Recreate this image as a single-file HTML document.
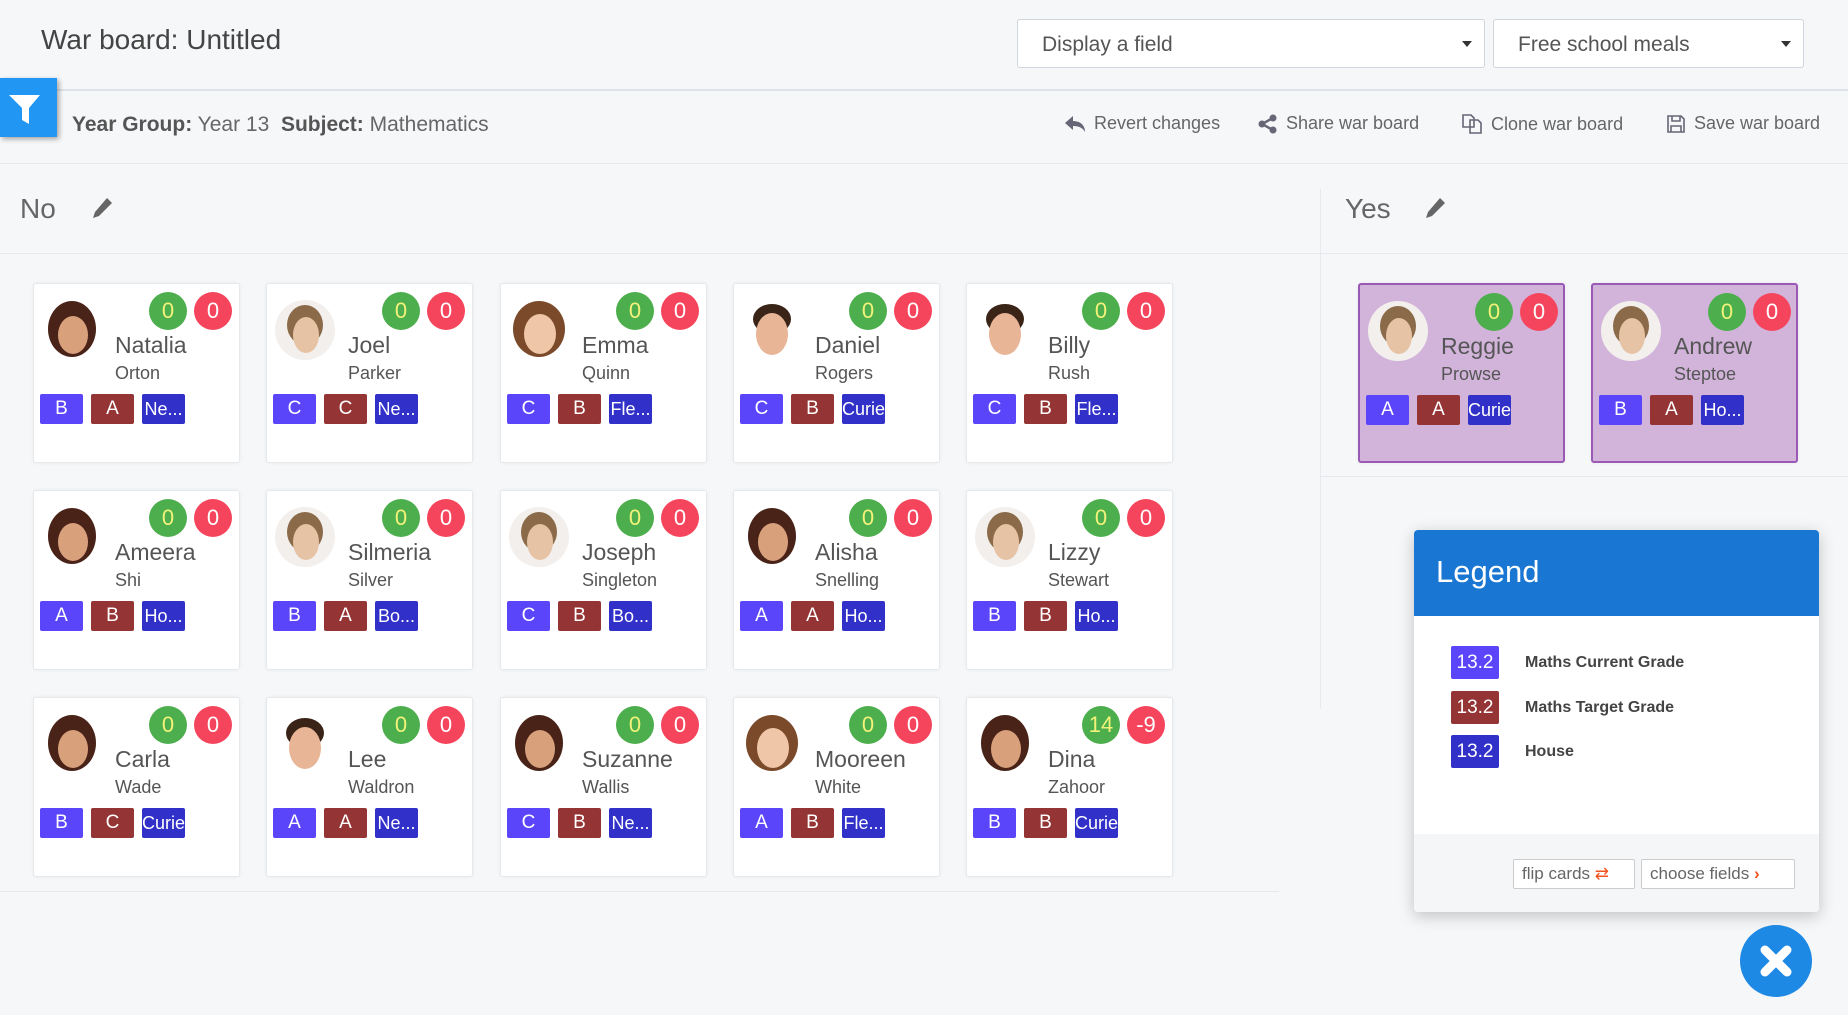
<!DOCTYPE html>
<html><head><meta charset="utf-8"><style>
*{box-sizing:border-box;margin:0;padding:0}
body{width:1848px;height:1015px;overflow:hidden;background:#f5f7f9;font-family:"Liberation Sans",sans-serif;color:#555;position:relative}
.abs{position:absolute}
.title{left:41px;top:24px;font-size:28px;color:#444}
.sel{top:19px;height:49px;border:1px solid #cfd5da;border-radius:3px;background:#fff;font-size:21px;color:#555;padding:13px 0 0 24px}
.sel:after{content:"";position:absolute;right:12px;top:21px;border:5px solid transparent;border-top:6px solid #333}
.hline{height:2px;background:#dde3e8}
.filter{left:0;top:78px;width:57px;height:59px;background:#2196f3;box-shadow:2px 2px 5px rgba(0,0,0,.35)}
.info{left:72px;top:113px;font-size:21px;color:#666}
.info b{color:#555}
.tb{top:113px;font-size:18px;color:#666;display:flex;align-items:center;gap:8px}
.col{font-size:28px;color:#666}
.card{position:absolute;width:207px;height:180px;background:#fff;border:1px solid #e6e9ec;border-radius:3px;box-shadow:0 0 3px rgba(0,0,0,.06)}
.card.y{background:#d2b4db;border:2px solid #9b59b6}
.card svg{position:absolute;left:8px;top:15px;width:60px;height:62px}
.g,.r{position:absolute;top:8px;width:38px;height:38px;border-radius:50%;color:#fff;font-size:22px;text-align:center;line-height:38px}
.g{left:115px;background:#4cae4c;color:#f2f27a}
.r{left:160px;background:#f5455c}
.fn{position:absolute;left:81px;top:48px;font-size:23px;color:#555}
.ln{position:absolute;left:81px;top:79px;font-size:18px;color:#555}
.chips{position:absolute;left:6px;top:110px;display:flex;gap:8px}
.chips i{font-style:normal;width:43px;height:30px;border-radius:2px;color:#fff;font-size:19px;text-align:center;line-height:30px;overflow:hidden;white-space:nowrap}
.c1{background:#5b45fa}.c2{background:#943434}.c3{background:#3131c9;font-size:18px!important}
.legend{left:1414px;top:530px;width:405px;height:382px;background:#fff;border-radius:4px;box-shadow:0 4px 16px rgba(0,0,0,.22);overflow:hidden}
.lh{height:86px;background:#1976d2;color:#fff;font-size:31px;padding:24px 0 0 22px}
.lr{position:absolute;left:37px;display:flex;align-items:center;gap:26px;font-size:16px;font-weight:bold;color:#444}
.lr i{font-style:normal;width:48px;height:33px;color:#fff;font-size:19px;font-weight:normal;text-align:center;line-height:33px;border-radius:2px}
.lf{position:absolute;left:0;bottom:0;width:100%;height:78px;background:#f5f6f7}
.btn{position:absolute;top:25px;height:30px;border:1px solid #ccc;background:#fff;border-radius:2px;font-size:17px;color:#666;padding:4px 0 0 8px}
.close{left:1740px;top:925px;width:72px;height:72px;border-radius:50%;background:#1e88e5}
</style></head><body>
<div class="abs title">War board: Untitled</div>
<div class="abs sel" style="left:1017px;width:468px">Display a field</div>
<div class="abs sel" style="left:1493px;width:311px">Free school meals</div>
<div class="abs hline" style="left:0;top:89px;width:1848px"></div>
<div class="abs filter"><svg width="57" height="59" viewBox="0 0 57 59"><path d="M9 17h31l-11 13v16l-7-4V30z" fill="#fff"/></svg></div>
<div class="abs info"><b>Year Group:</b> Year 13 &nbsp;<b>Subject:</b> Mathematics</div>
<div class="abs tb" style="left:1064px"><svg width="22" height="20" viewBox="0 0 22 20"><path d="M9 2L1 9l8 7v-4c6 0 10 2 12 6 0-7-5-11-12-11z" fill="#667"/></svg>Revert changes</div>
<div class="abs tb" style="left:1258px"><svg width="20" height="20" viewBox="0 0 20 20"><circle cx="15" cy="4" r="3.5" fill="#667"/><circle cx="4" cy="10" r="3.5" fill="#667"/><circle cx="15" cy="16" r="3.5" fill="#667"/><path d="M15 4L4 10l11 6" stroke="#667" stroke-width="2.5" fill="none"/></svg>Share war board</div>
<div class="abs tb" style="left:1461px"><svg width="22" height="22" viewBox="0 0 22 22"><path d="M2 2h8l3 3v9H2zM9 7h8l3 3v10H9z" fill="none" stroke="#667" stroke-width="1.6"/></svg>Clone war board</div>
<div class="abs tb" style="left:1666px"><svg width="20" height="20" viewBox="0 0 20 20"><path d="M2 2h13l3 3v13H2zM6 2v5h8V2M5 12h10v6H5z" fill="none" stroke="#667" stroke-width="1.6"/></svg>Save war board</div>
<div class="abs hline" style="left:0;top:163px;width:1848px;height:1px;background:#e6eaee"></div>
<div class="abs col" style="left:20px;top:193px">No</div>
<svg class="abs" style="left:90px;top:196px" width="24" height="24" viewBox="0 0 24 24"><path d="M17 2l5 5L9 20l-6 2 2-6z" fill="#666"/></svg>
<div class="abs col" style="left:1345px;top:193px">Yes</div>
<svg class="abs" style="left:1423px;top:196px" width="24" height="24" viewBox="0 0 24 24"><path d="M17 2l5 5L9 20l-6 2 2-6z" fill="#666"/></svg>
<div class="abs" style="left:0;top:253px;width:1320px;height:1px;background:#e6eaee"></div>
<div class="abs" style="left:1320px;top:189px;width:1px;height:520px;background:#e6eaee"></div>
<div class="abs" style="left:1321px;top:253px;width:527px;height:1px;background:#e6eaee"></div>
<div class="abs" style="left:1321px;top:476px;width:527px;height:1px;background:#e6eaee"></div>
<div class="abs" style="left:0;top:891px;width:1279px;height:1px;background:#e6eaee"></div>

<!-- avatar defs -->
<svg width="0" height="0" style="position:absolute"><defs>
<symbol id="a1" viewBox="0 0 60 62"><ellipse cx="30" cy="30" rx="24" ry="28" fill="#4a2318"/><ellipse cx="31" cy="36" rx="15" ry="19" fill="#d9a07c"/></symbol>
<symbol id="a2" viewBox="0 0 60 62"><circle cx="30" cy="31" r="30" fill="#f2efec"/><ellipse cx="30" cy="26" rx="18" ry="20" fill="#8a6a48"/><ellipse cx="31" cy="36" rx="13" ry="18" fill="#e7c3a5"/></symbol>
<symbol id="a3" viewBox="0 0 60 62"><ellipse cx="30" cy="30" rx="26" ry="28" fill="#7a4a2a"/><ellipse cx="31" cy="35" rx="16" ry="20" fill="#f0c6a8"/></symbol>
<symbol id="a4" viewBox="0 0 60 62"><ellipse cx="30" cy="20" rx="19" ry="15" fill="#3a2418"/><ellipse cx="30" cy="35" rx="16" ry="21" fill="#e8b596"/></symbol>
</defs></svg>

<!-- Row 1 -->
<div class="card" style="left:33px;top:283px"><svg><use href="#a1"/></svg><span class="g">0</span><span class="r">0</span><div class="fn">Natalia</div><div class="ln">Orton</div><div class="chips"><i class="c1">B</i><i class="c2">A</i><i class="c3">Ne...</i></div></div>
<div class="card" style="left:266px;top:283px"><svg><use href="#a2"/></svg><span class="g">0</span><span class="r">0</span><div class="fn">Joel</div><div class="ln">Parker</div><div class="chips"><i class="c1">C</i><i class="c2">C</i><i class="c3">Ne...</i></div></div>
<div class="card" style="left:500px;top:283px"><svg><use href="#a3"/></svg><span class="g">0</span><span class="r">0</span><div class="fn">Emma</div><div class="ln">Quinn</div><div class="chips"><i class="c1">C</i><i class="c2">B</i><i class="c3">Fle...</i></div></div>
<div class="card" style="left:733px;top:283px"><svg><use href="#a4"/></svg><span class="g">0</span><span class="r">0</span><div class="fn">Daniel</div><div class="ln">Rogers</div><div class="chips"><i class="c1">C</i><i class="c2">B</i><i class="c3">Curie</i></div></div>
<div class="card" style="left:966px;top:283px"><svg><use href="#a4"/></svg><span class="g">0</span><span class="r">0</span><div class="fn">Billy</div><div class="ln">Rush</div><div class="chips"><i class="c1">C</i><i class="c2">B</i><i class="c3">Fle...</i></div></div>
<!-- Row 2 -->
<div class="card" style="left:33px;top:490px"><svg><use href="#a1"/></svg><span class="g">0</span><span class="r">0</span><div class="fn">Ameera</div><div class="ln">Shi</div><div class="chips"><i class="c1">A</i><i class="c2">B</i><i class="c3">Ho...</i></div></div>
<div class="card" style="left:266px;top:490px"><svg><use href="#a2"/></svg><span class="g">0</span><span class="r">0</span><div class="fn">Silmeria</div><div class="ln">Silver</div><div class="chips"><i class="c1">B</i><i class="c2">A</i><i class="c3">Bo...</i></div></div>
<div class="card" style="left:500px;top:490px"><svg><use href="#a2"/></svg><span class="g">0</span><span class="r">0</span><div class="fn">Joseph</div><div class="ln">Singleton</div><div class="chips"><i class="c1">C</i><i class="c2">B</i><i class="c3">Bo...</i></div></div>
<div class="card" style="left:733px;top:490px"><svg><use href="#a1"/></svg><span class="g">0</span><span class="r">0</span><div class="fn">Alisha</div><div class="ln">Snelling</div><div class="chips"><i class="c1">A</i><i class="c2">A</i><i class="c3">Ho...</i></div></div>
<div class="card" style="left:966px;top:490px"><svg><use href="#a2"/></svg><span class="g">0</span><span class="r">0</span><div class="fn">Lizzy</div><div class="ln">Stewart</div><div class="chips"><i class="c1">B</i><i class="c2">B</i><i class="c3">Ho...</i></div></div>
<!-- Row 3 -->
<div class="card" style="left:33px;top:697px"><svg><use href="#a1"/></svg><span class="g">0</span><span class="r">0</span><div class="fn">Carla</div><div class="ln">Wade</div><div class="chips"><i class="c1">B</i><i class="c2">C</i><i class="c3">Curie</i></div></div>
<div class="card" style="left:266px;top:697px"><svg><use href="#a4"/></svg><span class="g">0</span><span class="r">0</span><div class="fn">Lee</div><div class="ln">Waldron</div><div class="chips"><i class="c1">A</i><i class="c2">A</i><i class="c3">Ne...</i></div></div>
<div class="card" style="left:500px;top:697px"><svg><use href="#a1"/></svg><span class="g">0</span><span class="r">0</span><div class="fn">Suzanne</div><div class="ln">Wallis</div><div class="chips"><i class="c1">C</i><i class="c2">B</i><i class="c3">Ne...</i></div></div>
<div class="card" style="left:733px;top:697px"><svg><use href="#a3"/></svg><span class="g">0</span><span class="r">0</span><div class="fn">Mooreen</div><div class="ln">White</div><div class="chips"><i class="c1">A</i><i class="c2">B</i><i class="c3">Fle...</i></div></div>
<div class="card" style="left:966px;top:697px"><svg><use href="#a1"/></svg><span class="g">14</span><span class="r">-9</span><div class="fn">Dina</div><div class="ln">Zahoor</div><div class="chips"><i class="c1">B</i><i class="c2">B</i><i class="c3">Curie</i></div></div>
<!-- Yes -->
<div class="card y" style="left:1358px;top:283px"><svg><use href="#a2"/></svg><span class="g">0</span><span class="r">0</span><div class="fn">Reggie</div><div class="ln">Prowse</div><div class="chips"><i class="c1">A</i><i class="c2">A</i><i class="c3">Curie</i></div></div>
<div class="card y" style="left:1591px;top:283px"><svg><use href="#a2"/></svg><span class="g">0</span><span class="r">0</span><div class="fn">Andrew</div><div class="ln">Steptoe</div><div class="chips"><i class="c1">B</i><i class="c2">A</i><i class="c3">Ho...</i></div></div>

<div class="abs legend">
<div class="lh">Legend</div>
<div class="lr" style="top:116px"><i class="c1">13.2</i>Maths Current Grade</div>
<div class="lr" style="top:161px"><i class="c2">13.2</i>Maths Target Grade</div>
<div class="lr" style="top:205px"><i style="background:#3131c9">13.2</i>House</div>
<div class="lf">
<div class="btn" style="left:99px;width:122px">flip cards <span style="color:#f4511e">⇄</span></div>
<div class="btn" style="left:227px;width:154px">choose fields <span style="color:#f4511e;font-weight:bold">›</span></div>
</div>
</div>
<div class="abs close"><svg width="72" height="72" viewBox="0 0 72 72"><path d="M25 25L47 47M47 25L25 47" stroke="#fff" stroke-width="9" stroke-linecap="round"/></svg></div>
</body></html>
